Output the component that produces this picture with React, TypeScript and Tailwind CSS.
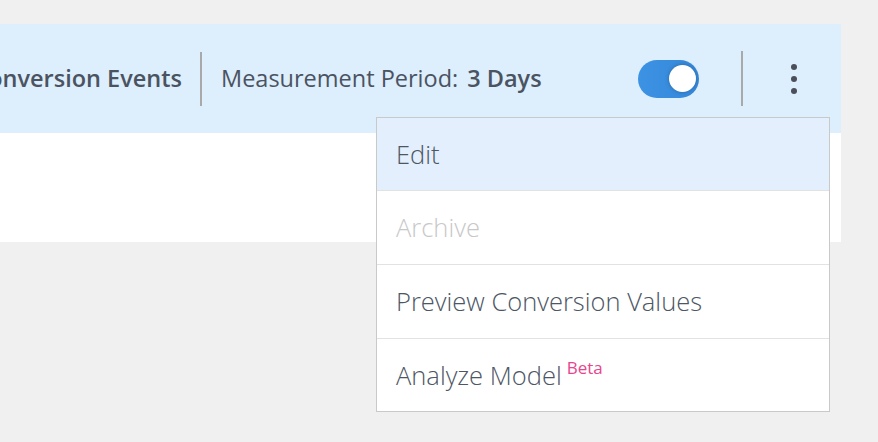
import React from "react";

export default function App() {
  return (
    <div className="w-[878px] h-[442px] bg-[#f0f0f0] pt-[24px] overflow-hidden">
      <div className="relative w-[841px] h-[218px] bg-white font-['Open_Sans',sans-serif]">
        <div className="h-[109px] bg-[#ddeefd] flex items-center overflow-hidden">
          <div className="w-[182px] flex justify-end overflow-hidden shrink-0">
            <span className="text-[23.5px] font-semibold text-[#4b5361] whitespace-nowrap">Conversion Events</span>
          </div>
          <div className="w-[2px] h-[54px] bg-[#a9a9a9] ml-[18px] mr-[19px] shrink-0" />
          <div className="flex items-center whitespace-nowrap text-[23.5px] text-[#4b5361]">
            <span>Measurement Period:</span>
            <span className="font-semibold ml-[9px]">3 Days</span>
          </div>
          <div className="flex-1" />
          <div className="w-[61px] h-[38px] rounded-full bg-gradient-to-r from-[#3c92e3] to-[#3688da] flex items-center justify-end pr-[3px] shrink-0">
            <div className="w-[27px] h-[27px] rounded-full bg-white shadow-[0_0_4px_rgba(0,0,0,0.25)]" />
          </div>
          <div className="w-[2px] h-[55px] bg-[#a9a9a9] ml-[42px] shrink-0" />
          <div className="flex flex-col items-center gap-[6px] ml-[48px] mr-[44px] shrink-0">
            <div className="w-[6px] h-[6px] rounded-full bg-[#4a4f59]" />
            <div className="w-[6px] h-[6px] rounded-full bg-[#4a4f59]" />
            <div className="w-[6px] h-[6px] rounded-full bg-[#4a4f59]" />
          </div>
        </div>
        <div className="absolute left-[376px] top-[93px] w-[454px] bg-white border border-[#c9c9c9] flex flex-col">
          <div className="h-[73px] bg-[#e3effc] border-b border-[#e2e2e2] flex items-center pl-[19px] text-[25.5px] font-light text-[#4d5664]">Edit</div>
          <div className="h-[74px] border-b border-[#e2e2e2] flex items-center pl-[19px] text-[25.5px] font-light text-[#c8c8c8]">Archive</div>
          <div className="h-[74px] border-b border-[#e2e2e2] flex items-center pl-[19px] text-[25.5px] font-light text-[#4d5664]">Preview Conversion Values</div>
          <div className="h-[72px] flex items-center pl-[19px] text-[25.5px] font-light text-[#4d5664]">
            <span>Analyze Model</span>
            <span className="text-[17px] font-normal text-[#e8458e] ml-[5px] relative top-[-7px]">Beta</span>
          </div>
        </div>
      </div>
    </div>
  );
}
